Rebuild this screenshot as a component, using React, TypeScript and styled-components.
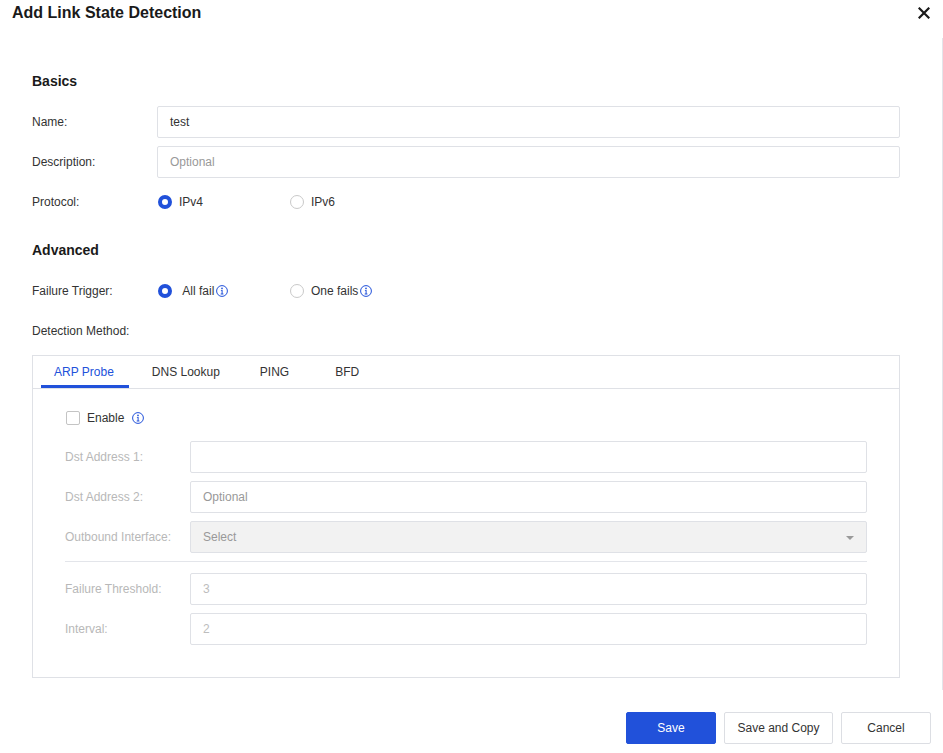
import React from 'react';
import styled, { createGlobalStyle, css } from 'styled-components';

const BLUE = '#2151da';

const GlobalStyle = createGlobalStyle`
  html, body {
    margin: 0;
    padding: 0;
    background: #fff;
  }
  body {
    font-family: "Liberation Sans", Arial, sans-serif;
    font-size: 12px;
    color: #333;
  }
  * {
    box-sizing: border-box;
  }
`;

const Dialog = styled.div`
  display: flex;
  flex-direction: column;
  width: 943px;
  height: 753px;
  background: #fff;
`;

const Header = styled.div`
  display: flex;
  justify-content: space-between;
  align-items: center;
  height: 25px;
  padding: 1px 12px 0;
  margin-bottom: 13px;
`;

const Title = styled.h1`
  margin: 0;
  font-size: 16px;
  font-weight: bold;
  color: #1a1a1a;
`;

const CloseButton = styled.button`
  display: flex;
  align-items: center;
  justify-content: center;
  width: 16px;
  height: 16px;
  padding: 0;
  margin-right: -1px;
  border: none;
  background: none;
  cursor: pointer;
`;

const Body = styled.div`
  height: 652px;
  padding: 33px 42px 0 32px;
  border-right: 1px solid #e3e5ea;
  overflow: hidden;
`;

const SectionTitle = styled.h2<{ $first?: boolean }>`
  margin: ${({ $first }) => ($first ? '0' : '22px')} 0 15px;
  font-size: 14px;
  line-height: 20px;
  font-weight: bold;
  color: #1a1a1a;
`;

const Rows = styled.div`
  display: flex;
  flex-direction: column;
  gap: 8px;
`;

const Row = styled.div`
  display: flex;
  align-items: center;
  min-height: 32px;
`;

const Label = styled.span<{ $disabled?: boolean }>`
  flex: 0 0 125px;
  color: ${({ $disabled }) => ($disabled ? '#b8b8b8' : '#333')};
`;

const Field = styled.div<{ $disabled?: boolean; $muted?: boolean }>`
  position: relative;
  flex: 1;
  display: flex;
  align-items: center;
  height: 32px;
  padding: 0 12px;
  border: 1px solid #dfe1e6;
  border-radius: 2px;
  background: ${({ $disabled }) => ($disabled ? '#f2f2f2' : '#fff')};
  color: ${({ $muted }) => ($muted ? '#999' : '#333')};
`;

const FieldText = styled.span<{ $faint?: boolean }>`
  color: ${({ $faint }) => ($faint ? '#bdbdbd' : 'inherit')};
`;

const Caret = styled.span`
  position: absolute;
  right: 12px;
  top: 14px;
  width: 0;
  height: 0;
  border-left: 4px solid transparent;
  border-right: 4px solid transparent;
  border-top: 4px solid #9a9a9a;
`;

const RadioGroup = styled.div`
  display: flex;
  padding-left: 1px;
`;

const RadioOption = styled.label`
  display: flex;
  align-items: center;
  width: 132px;
  color: #333;
  cursor: pointer;
`;

const RadioDot = styled.span<{ $checked?: boolean }>`
  flex: 0 0 14px;
  width: 14px;
  height: 14px;
  margin-right: 7px;
  border-radius: 50%;
  ${({ $checked }) =>
    $checked
      ? css`
          border: 4px solid ${BLUE};
          background: #fff;
        `
      : css`
          border: 1px solid #c9c9c9;
          background: #fff;
        `}
`;

const InfoMark = styled.svg`
  flex: 0 0 12px;
  margin-left: 2px;
`;

const Panel = styled.div`
  margin-top: 8px;
  border: 1px solid #dfe1e6;
  height: 323px;
`;

const TabList = styled.div`
  display: flex;
  height: 33px;
  padding-left: 8px;
  border-bottom: 1px solid #dfe1e6;
`;

const Tab = styled.div<{ $active?: boolean; $gap: number }>`
  display: flex;
  align-items: center;
  height: 32px;
  padding: 3px 13px 0;
  margin-right: ${({ $gap }) => $gap}px;
  color: ${({ $active }) => ($active ? BLUE : '#333')};
  border-bottom: 3px solid ${({ $active }) => ($active ? BLUE : 'transparent')};
  cursor: pointer;

  &:first-child {
    padding-right: 15px;
  }
`;

const PanelBody = styled.div`
  padding: 19px 32px 0 32px;
`;

const CheckRow = styled.label`
  display: flex;
  align-items: center;
  height: 20px;
  margin: 0 0 13px 1px;
  color: #333;
`;

const CheckBox = styled.span`
  width: 14px;
  height: 14px;
  margin-right: 7px;
  border: 1px solid #c4c4c4;
  border-radius: 2px;
  background: #fff;
`;

const EnableInfo = styled.span`
  display: flex;
  margin-left: 6px;
`;

const Divider = styled.hr`
  margin: 0 0 3px;
  border: none;
  border-top: 1px solid #e3e5ea;
  height: 0;
`;

const Footer = styled.div`
  display: flex;
  justify-content: flex-end;
  gap: 8px;
  padding: 22px 12px 0 0;
`;

const Button = styled.button<{ $primary?: boolean; $width: number }>`
  width: ${({ $width }) => $width}px;
  height: 32px;
  border-radius: 2px;
  font-family: inherit;
  font-size: 12px;
  cursor: pointer;
  ${({ $primary }) =>
    $primary
      ? css`
          border: 1px solid ${BLUE};
          background: ${BLUE};
          color: #fff;
        `
      : css`
          border: 1px solid #dcdee3;
          background: #fff;
          color: #333;
        `}
`;

const Info = () => (
  <InfoMark width="12" height="12" viewBox="0 0 12 12">
    <circle cx="6" cy="6" r="5.4" fill="none" stroke={BLUE} strokeWidth="1" />
    <circle cx="6" cy="3.4" r="0.85" fill={BLUE} />
    <path d="M4.9 5h1.7v3.6h0.8v0.8H4.7v-0.8h0.9V5.8h-0.7z" fill={BLUE} />
  </InfoMark>
);

const Radio = ({ checked, children }: { checked?: boolean; children: React.ReactNode }) => (
  <RadioOption>
    <RadioDot $checked={checked} />
    {children}
  </RadioOption>
);

const tabs = [
  { name: 'ARP Probe', gap: 10 },
  { name: 'DNS Lookup', gap: 14 },
  { name: 'PING', gap: 20 },
  { name: 'BFD', gap: 0 },
];

const App = () => (
  <>
    <GlobalStyle />
    <Dialog>
      <Header>
        <Title>Add Link State Detection</Title>
        <CloseButton aria-label="Close">
          <svg width="12" height="12" viewBox="0 0 12 12">
            <path d="M1.5 1.5l9 9M10.5 1.5l-9 9" stroke="#1a1a1a" strokeWidth="2.2" strokeLinecap="square" />
          </svg>
        </CloseButton>
      </Header>

      <Body>
        <SectionTitle $first>Basics</SectionTitle>
        <Rows>
          <Row>
            <Label>Name:</Label>
            <Field>test</Field>
          </Row>
          <Row>
            <Label>Description:</Label>
            <Field $muted>Optional</Field>
          </Row>
          <Row>
            <Label>Protocol:</Label>
            <RadioGroup>
              <Radio checked>IPv4</Radio>
              <Radio>IPv6</Radio>
            </RadioGroup>
          </Row>
        </Rows>

        <SectionTitle>Advanced</SectionTitle>
        <Rows>
          <Row>
            <Label>Failure Trigger:</Label>
            <RadioGroup>
              <Radio checked>
                &nbsp;All fail
                <Info />
              </Radio>
              <Radio>
                One fails
                <Info />
              </Radio>
            </RadioGroup>
          </Row>
          <Row>
            <Label>Detection Method:</Label>
          </Row>
        </Rows>

        <Panel>
          <TabList>
            {tabs.map((t, i) => (
              <Tab key={t.name} $active={i === 0} $gap={t.gap}>
                {t.name}
              </Tab>
            ))}
          </TabList>
          <PanelBody>
            <CheckRow>
              <CheckBox />
              Enable
              <EnableInfo>
                <Info />
              </EnableInfo>
            </CheckRow>
            <Rows>
              <Row>
                <Label $disabled>Dst Address 1:</Label>
                <Field />
              </Row>
              <Row>
                <Label $disabled>Dst Address 2:</Label>
                <Field $muted>Optional</Field>
              </Row>
              <Row>
                <Label $disabled>Outbound Interface:</Label>
                <Field $disabled $muted>
                  Select
                  <Caret />
                </Field>
              </Row>
              <Divider />
              <Row>
                <Label $disabled>Failure Threshold:</Label>
                <Field>
                  <FieldText $faint>3</FieldText>
                </Field>
              </Row>
              <Row>
                <Label $disabled>Interval:</Label>
                <Field>
                  <FieldText $faint>2</FieldText>
                </Field>
              </Row>
            </Rows>
          </PanelBody>
        </Panel>
      </Body>

      <Footer>
        <Button $primary $width={90}>Save</Button>
        <Button $width={109}>Save and Copy</Button>
        <Button $width={90}>Cancel</Button>
      </Footer>
    </Dialog>
  </>
);

export default App;
